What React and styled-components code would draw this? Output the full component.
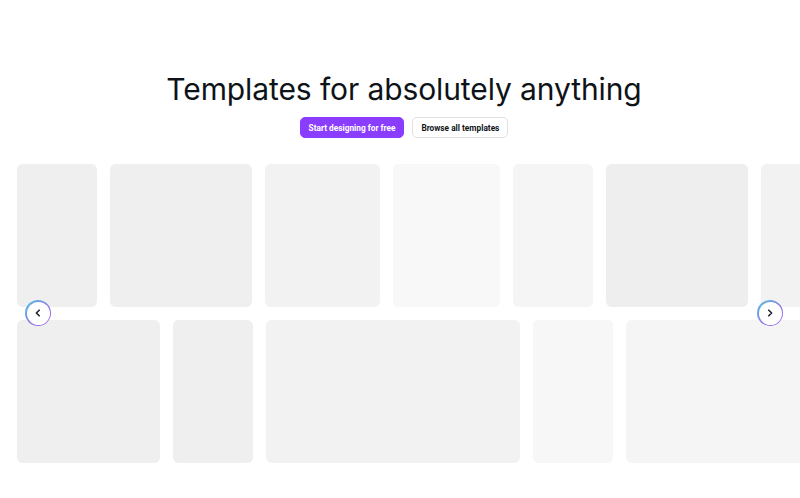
import React from "react";
import styled, { createGlobalStyle } from "styled-components";

const GlobalStyle = createGlobalStyle`
  html, body {
    margin: 0;
    padding: 0;
    background: #ffffff;
  }
  body {
    font-family: Inter, "Noto Sans", sans-serif;
    color: #0e1318;
  }
`;

const Page = styled.main`
  width: 800px;
  height: 498px;
  overflow: hidden;
  display: flex;
  flex-direction: column;
  padding-top: 70px;
  box-sizing: border-box;
`;

const Header = styled.header`
  display: flex;
  flex-direction: column;
  align-items: center;
  padding-left: 8px;
`;

const Title = styled.h1`
  margin: 0;
  font-family: Inter, "Noto Sans", sans-serif;
  font-weight: 400;
  font-size: 30px;
  line-height: 38px;
  letter-spacing: -0.1px;
  color: #0e1318;
`;

const Actions = styled.div`
  display: flex;
  gap: 8px;
  margin-top: 9px;
`;

const Button = styled.button`
  height: 21px;
  padding: 0 8px;
  border-radius: 5px;
  white-space: nowrap;
  font-family: Roboto, "Noto Sans", sans-serif;
  font-size: 8.3px;
  font-weight: 700;
  cursor: pointer;
  border: 1px solid ${(p) => (p.$primary ? "#8b3dff" : "#dfe1e5")};
  background: ${(p) => (p.$primary ? "#8b3dff" : "#ffffff")};
  color: ${(p) => (p.$primary ? "#ffffff" : "#0e1318")};
`;

const Carousel = styled.section`
  position: relative;
  margin-top: 26px;
  display: flex;
  flex-direction: column;
  gap: 13px;
`;

const Row = styled.div`
  display: flex;
  gap: 13px;
  padding-left: 17px;
  height: 143px;
  overflow: hidden;
`;

const Card = styled.div`
  flex: 0 0 ${(p) => p.$w}px;
  height: 100%;
  border-radius: 6px;
  background: ${(p) => p.$bg};
  box-shadow: 0 0 1px rgba(0, 0, 0, 0.04);
`;

const Arrow = styled.button`
  position: absolute;
  top: 136px;
  ${(p) => (p.$side === "left" ? "left: 25px;" : "right: 17px;")}
  width: 26px;
  height: 26px;
  padding: 0;
  border: none;
  border-radius: 50%;
  background: linear-gradient(135deg, #52c9e0 0%, #8f72ea 60%, #a35af0 100%);
  display: flex;
  align-items: center;
  justify-content: center;
  cursor: pointer;
`;

const ArrowFace = styled.span`
  width: 23px;
  height: 23px;
  border-radius: 50%;
  background: #ffffff;
  display: flex;
  align-items: center;
  justify-content: center;
`;

const Chevron = ({ dir }) => (
  <svg width="10" height="10" viewBox="0 0 10 10" fill="none">
    <path
      d={dir === "left" ? "M6.2 2.2 3.4 5l2.8 2.8" : "M3.8 2.2 6.6 5 3.8 7.8"}
      stroke="#1f2328"
      strokeWidth="1.6"
      strokeLinecap="round"
      strokeLinejoin="round"
    />
  </svg>
);

const topRow = [
  { w: 80, bg: "#efefef" },
  { w: 142, bg: "#efefef" },
  { w: 115, bg: "#f2f2f2" },
  { w: 107, bg: "#f8f8f8" },
  { w: 80, bg: "#f5f5f5" },
  { w: 142, bg: "#eeeeee" },
  { w: 114, bg: "#f2f2f2" },
];

const bottomRow = [
  { w: 143, bg: "#efefef" },
  { w: 80, bg: "#efefef" },
  { w: 254, bg: "#f2f2f2" },
  { w: 80, bg: "#f7f7f7" },
  { w: 200, bg: "#f5f5f5" },
];

export default function App() {
  return (
    <>
      <GlobalStyle />
      <Page>
        <Header>
          <Title>Templates for absolutely anything</Title>
          <Actions>
            <Button $primary>Start designing for free</Button>
            <Button>Browse all templates</Button>
          </Actions>
        </Header>
        <Carousel>
          <Row>
            {topRow.map((c, i) => (
              <Card key={i} $w={c.w} $bg={c.bg} />
            ))}
          </Row>
          <Row>
            {bottomRow.map((c, i) => (
              <Card key={i} $w={c.w} $bg={c.bg} />
            ))}
          </Row>
          <Arrow $side="left" aria-label="Previous">
            <ArrowFace>
              <Chevron dir="left" />
            </ArrowFace>
          </Arrow>
          <Arrow $side="right" aria-label="Next">
            <ArrowFace>
              <Chevron dir="right" />
            </ArrowFace>
          </Arrow>
        </Carousel>
      </Page>
    </>
  );
}
